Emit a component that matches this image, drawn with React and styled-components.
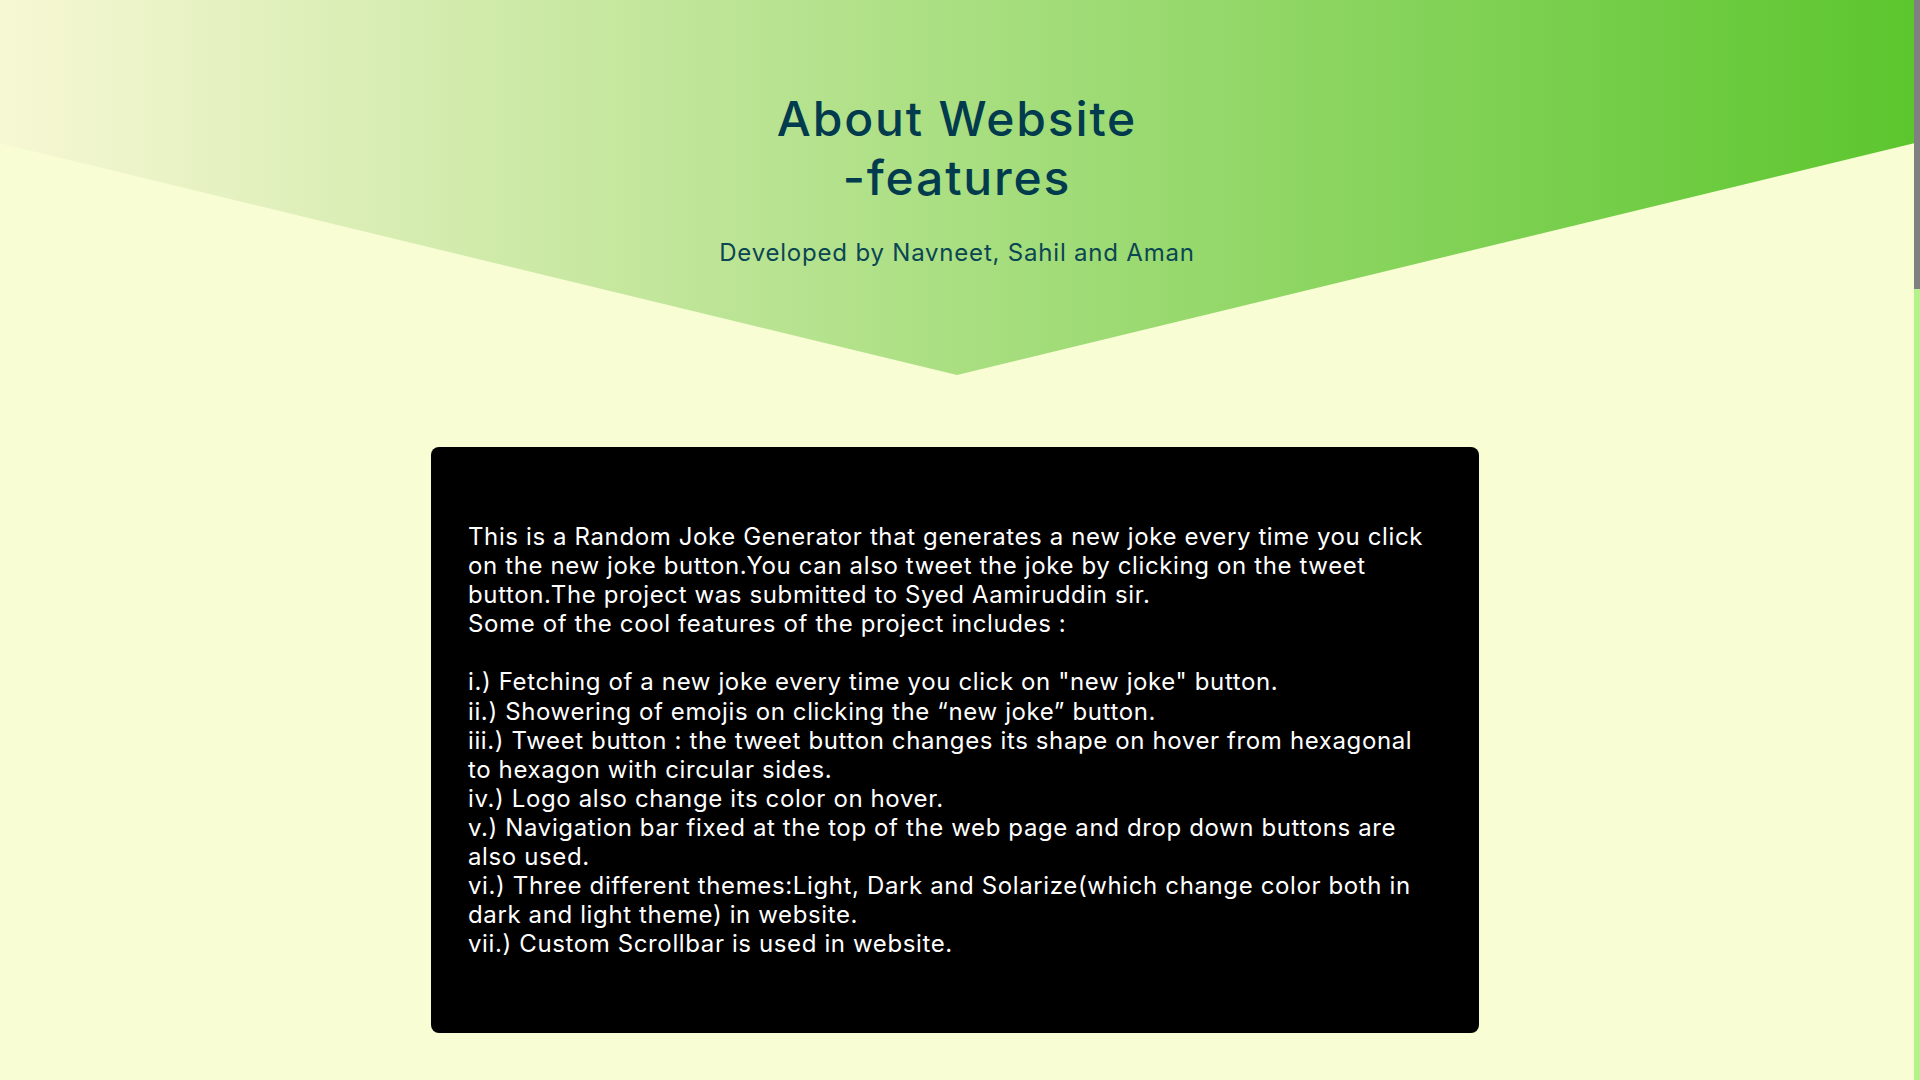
import styled, { createGlobalStyle } from "styled-components";

const GlobalStyle = createGlobalStyle`
    html, body {
        margin: 0;
        padding: 0;
        background: #f8fdd3;
        overflow: hidden;
    }

    body {
        font-family: Inter, "Open Sans", "Liberation Sans", sans-serif;
    }
`;

const intro = [
    "This is a Random Joke Generator that generates a new joke every time you click",
    "on the new joke button.You can also tweet the joke by clicking on the tweet",
    "button.The project was submitted to Syed Aamiruddin sir.",
    "Some of the cool features of the project includes :",
];

const features = [
    "i.) Fetching of a new joke every time you click on \"new joke\" button.",
    "ii.) Showering of emojis on clicking the \u201cnew joke\u201d button.",
    "iii.) Tweet button : the tweet button changes its shape on hover from hexagonal",
    "to hexagon with circular sides.",
    "iv.) Logo also change its color on hover.",
    "v.) Navigation bar fixed at the top of the web page and drop down buttons are",
    "also used.",
    "vi.) Three different themes:Light, Dark and Solarize(which change color both in",
    "dark and light theme) in website.",
    "vii.) Custom Scrollbar is used in website.",
];

const App = () => {
    return (
        <Layout>
            <GlobalStyle />
            <Content>
                <Header>
                    <Title>
                        About Website
                        <br />
                        -features
                    </Title>
                    <Subtitle>Developed by Navneet, Sahil and Aman</Subtitle>
                </Header>
                <Card>
                    {intro.map((line) => (
                        <Line key={line}>{line}</Line>
                    ))}
                    <Line />
                    {features.map((line) => (
                        <Line key={line}>{line}</Line>
                    ))}
                </Card>
            </Content>
            <ScrollTrack>
                <ScrollThumb />
            </ScrollTrack>
        </Layout>
    );
};

const Layout = styled.div`
    display: flex;
    height: 100vh;
    overflow: hidden;
`;

const Content = styled.main`
    flex: 1;
    min-width: 0;
    overflow: hidden;
`;

const ScrollTrack = styled.aside`
    width: 6px;
    flex-shrink: 0;
    background: #b6f28a;
`;

const ScrollThumb = styled.div`
    height: 289px;
    background: #808080;
`;

const Header = styled.header`
    height: 375px;
    box-sizing: border-box;
    padding-top: 90px;
    text-align: center;
    background: linear-gradient(to right, #f7f7d4 0%, #5cc62e 100%);
    clip-path: polygon(0 0, 100% 0, 100% 38.2%, 50% 100%, 0 38.2%);
`;

const Title = styled.h1`
    margin: 0;
    font-size: 48px;
    font-weight: 500;
    line-height: 58.5px;
    color: #013b4d;
    letter-spacing: 1.85px;
`;

const Subtitle = styled.p`
    margin: 31px 0 0;
    font-size: 24px;
    font-weight: 400;
    line-height: 29px;
    color: #0b4652;
    letter-spacing: 0.8px;
`;

const Card = styled.section`
    width: 1048px;
    box-sizing: border-box;
    margin: 72px 0 0 calc(50% - 526px);
    padding: 75px 37px 75px;
    background: #000;
    border-radius: 8px;
    color: #fff;
`;

const Line = styled.div`
    font-size: 24px;
    line-height: 29.1px;
    min-height: 29.1px;
    white-space: nowrap;
    letter-spacing: 0.62px;
`;

export default App;
